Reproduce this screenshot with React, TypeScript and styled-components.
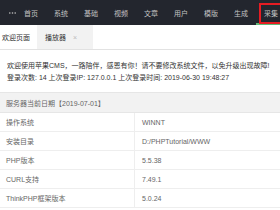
import React, { FC } from 'react';
import styled, { createGlobalStyle } from 'styled-components';

const GlobalStyle = createGlobalStyle`
  html, body {
    margin: 0;
    padding: 0;
    background: #fff;
    font-family: "Liberation Sans", "Noto Sans CJK SC", sans-serif;
  }
`;

const navItems = ['首页', '系统', '基础', '视频', '文章', '用户', '模版', '生成', '采集'];

const serverRows = [
  { label: '操作系统', value: 'WINNT' },
  { label: '安装目录', value: 'D:/PHPTutorial/WWW' },
  { label: 'PHP版本', value: '5.5.38' },
  { label: 'CURL支持', value: '7.49.1' },
  { label: 'ThinkPHP框架版本', value: '5.0.24' },
];

const Page = styled.div`
  width: 280px;
  height: 210px;
  overflow: hidden;
  position: relative;
`;

const Header = styled.div`
  height: 25px;
  background: #23262e;
  display: flex;
  align-items: stretch;
  padding-left: 9px;
  white-space: nowrap;
`;

const MoreIcon = styled.div`
  width: 17px;
  display: flex;
  align-items: center;
  justify-content: center;
`;

const NavItem = styled.div<{ $active?: boolean }>`
  width: 30px;
  flex: none;
  position: relative;
  display: flex;
  align-items: center;
  padding-left: 8px;
  box-sizing: border-box;
  font-size: 7px;
  color: #c2c2c2;
  &::after {
    content: '';
    display: ${(p) => (p.$active ? 'block' : 'none')};
    position: absolute;
    left: 0;
    right: 0;
    bottom: 0;
    height: 2px;
    background: #5fb878;
  }
`;

const Highlight = styled.div`
  position: absolute;
  left: 259px;
  top: 3px;
  width: 30px;
  height: 21px;
  border: 2px solid #e51c23;
  box-sizing: border-box;
`;

const TabBar = styled.div`
  height: 24px;
  display: flex;
  border-bottom: 1px solid #e2e2e2;
  background: #fff;
`;

const Tab = styled.div<{ $current?: boolean }>`
  display: flex;
  align-items: center;
  font-size: 7px;
  color: #333;
  padding: 0 ${(p) => (p.$current ? '16px 0 8px' : '7px 0 2px')};
  background: ${(p) => (p.$current ? '#f2f2f2' : '#fff')};
`;

const Close = styled.span`
  margin-left: 7px;
  color: #bbb;
  font-size: 7px;
`;

const Welcome = styled.div`
  padding: 10px 7px 8px;
  font-size: 7px;
  line-height: 12px;
  color: #333;
  white-space: nowrap;
`;

const Table = styled.div`
  border-top: 1px solid #e6e6e6;
`;

const TableHead = styled.div`
  height: 19px;
  background: #f2f2f2;
  display: flex;
  align-items: center;
  padding-left: 6px;
  font-size: 7px;
  color: #666;
  border-bottom: 1px solid #e6e6e6;
  box-sizing: border-box;
  height: 20px;
`;

const Row = styled.div`
  display: grid;
  grid-template-columns: 135px 1fr;
  height: 19px;
  border-bottom: 1px solid #eee;
  box-sizing: border-box;
`;

const Cell = styled.div<{ $first?: boolean }>`
  display: flex;
  align-items: center;
  padding-left: ${(p) => (p.$first ? '6px' : '7px')};
  font-size: 7px;
  color: #666;
  white-space: nowrap;
  border-right: ${(p) => (p.$first ? '1px solid #eee' : 'none')};
`;

const App: FC = () => (
  <Page>
    <GlobalStyle />
    <Header>
      <MoreIcon>
        <svg width="7" height="2" viewBox="0 0 7 2">
          <circle cx="0.8" cy="1" r="0.8" fill="#c2c2c2" />
          <circle cx="3.5" cy="1" r="0.8" fill="#c2c2c2" />
          <circle cx="6.2" cy="1" r="0.8" fill="#c2c2c2" />
        </svg>
      </MoreIcon>
      {navItems.map((item, i) => (
        <NavItem key={item} $active={i === navItems.length - 1}>{item}</NavItem>
      ))}
    </Header>
    <Highlight />
    <TabBar>
      <Tab>欢迎页面</Tab>
      <Tab $current>
        播放器
        <Close>×</Close>
      </Tab>
    </TabBar>
    <Welcome>
      <div>欢迎使用苹果CMS，一路陪伴，感恩有你！请不要修改系统文件，以免升级出现故障!</div>
      <div>登录次数: 14 上次登录IP: 127.0.0.1 上次登录时间: 2019-06-30 19:48:27</div>
    </Welcome>
    <Table>
      <TableHead>服务器当前日期【2019-07-01】</TableHead>
      {serverRows.map((row) => (
        <Row key={row.label}>
          <Cell $first>{row.label}</Cell>
          <Cell>{row.value}</Cell>
        </Row>
      ))}
    </Table>
  </Page>
);

export default App;
